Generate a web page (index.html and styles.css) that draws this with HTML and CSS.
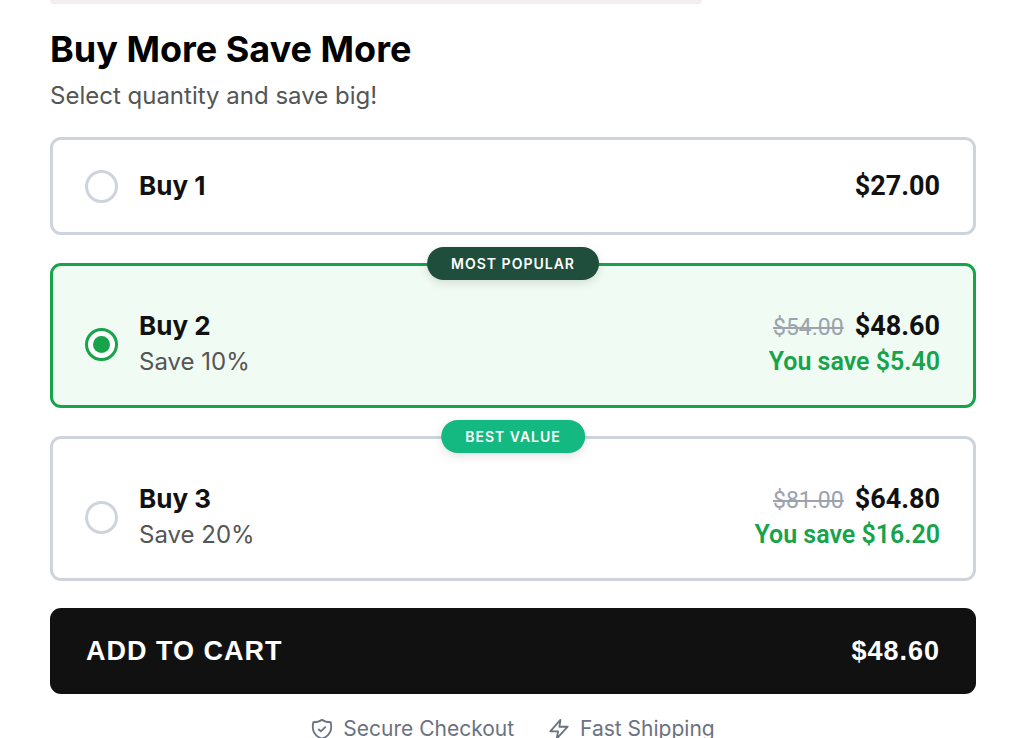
FILE: index.html
```
<!DOCTYPE html>
<html lang="en">

<head>
    <meta charset="UTF-8">
    <meta name="viewport" content="width=device-width, initial-scale=1.0">
    <title>Buy More Save More</title>
    <link rel="stylesheet" href="styles.css">
</head>

<body>
    <main class="product">
        <!-- end of the notice above the offer -->
        <div class="notice"></div>

        <form class="bundle">
            <h2 class="bundle-title">Buy More Save More</h2>
            <p class="bundle-subtitle">Select quantity and save big!</p>

            <div class="options">
                <label class="option">
                    <input type="radio" name="quantity" value="1" class="option-radio">
                    <span class="option-info">
                        <span class="option-name">Buy 1</span>
                    </span>
                    <span class="option-price">
                        <span class="price-row"><span class="price">$27.00</span></span>
                    </span>
                </label>

                <label class="option has-badge selected">
                    <span class="badge badge-popular">Most Popular</span>
                    <input type="radio" name="quantity" value="2" class="option-radio" checked>
                    <span class="option-info">
                        <span class="option-name">Buy 2</span>
                        <span class="option-note">Save 10%</span>
                    </span>
                    <span class="option-price">
                        <span class="price-row"><s class="old-price">$54.00</s><span class="price">$48.60</span></span>
                        <span class="saving">You save $5.40</span>
                    </span>
                </label>

                <label class="option has-badge">
                    <span class="badge badge-value">Best Value</span>
                    <input type="radio" name="quantity" value="3" class="option-radio">
                    <span class="option-info">
                        <span class="option-name">Buy 3</span>
                        <span class="option-note">Save 20%</span>
                    </span>
                    <span class="option-price">
                        <span class="price-row"><s class="old-price">$81.00</s><span class="price">$64.80</span></span>
                        <span class="saving">You save $16.20</span>
                    </span>
                </label>
            </div>

            <button type="button" class="cart-btn">
                <span>ADD TO CART</span>
                <span>$48.60</span>
            </button>
        </form>

        <div class="trust">
            <span class="trust-item">
                <svg class="trust-icon" viewBox="0 0 24 24" aria-hidden="true">
                    <path d="M12 2c2.600 2 5.400 2.600 9.500 2.600.7 2.800.9 5.800.2 8.400C20.500 17.500 16.800 20.800 12 22.500 7.200 20.800 3.500 17.500 2.300 13c-.7-2.600-.5-5.600.2-8.400C6.600 4.600 9.400 4 12 2z" />
                    <path d="M8.500 12.500l2.300 2 4.700-4.500" />
                </svg>
                Secure Checkout
            </span>
            <span class="trust-item">
                <svg class="trust-icon" viewBox="0 0 24 24" aria-hidden="true">
                    <path d="M13.500 2L2.500 14.500H11L9.500 22.500 21.500 9.500H12.500z" />
                </svg>
                Fast Shipping
            </span>
        </div>
    </main>
</body>

</html>
```
FILE: styles.css
```
* {
    box-sizing: border-box;
    margin: 0;
    padding: 0;
}

body {
    background-color: #fff;
    color: #111;
    font-family: Inter, "Liberation Sans", sans-serif;
}

.product {
    padding: 0 48px 0 50px;
}

.notice {
    max-width: 652px;
    height: 4px;
    background-color: #f5eeef;
    border-radius: 0 0 10px 10px;
}

/* heading */
.bundle-title {
    margin-top: 23px;
    color: #000;
    font-size: 36px;
    line-height: 44px;
    font-weight: 700;
}

.bundle-subtitle {
    margin-top: 7px;
    color: #555;
    font-size: 24px;
    line-height: 36px;
}

/* quantity options */
.options {
    display: flex;
    flex-direction: column;
    gap: 28px;
    margin-top: 23px;
}

.option {
    position: relative;
    display: flex;
    align-items: center;
    gap: 21px;
    padding: 28px 33px 28px 32px;
    border: 3px solid #cfd3dc;
    border-radius: 11px;
    cursor: pointer;
}

.option.has-badge {
    padding-top: 42px;
    padding-bottom: 25px;
}

.option.selected {
    background-color: #f0fbf4;
    border-color: #16a34a;
}

.option-radio {
    appearance: none;
    flex: none;
    display: grid;
    place-items: center;
    width: 33px;
    height: 33px;
    background-color: #fff;
    border: 3px solid #cfd3dc;
    border-radius: 50%;
}

.option-radio:checked {
    border-color: #16a34a;
}

.option-radio:checked::before {
    content: "";
    width: 17px;
    height: 17px;
    background-color: #16a34a;
    border-radius: 50%;
}

.option-info,
.option-price {
    display: flex;
    flex-direction: column;
    line-height: 36px;
}

.option-price {
    align-items: flex-end;
    margin-left: auto;
    font-family: Roboto, "Liberation Sans", sans-serif;
}

.option-name {
    font-size: 26px;
    font-weight: 700;
}

.option-note {
    color: #555;
    font-size: 24px;
}

.price-row {
    display: flex;
    align-items: baseline;
    gap: 11px;
    height: 36px;
}

.price {
    font-size: 27px;
    font-weight: 700;
}

.old-price {
    color: #9ca3af;
    font-size: 23px;
}

.saving {
    color: #16a34a;
    font-size: 25px;
    font-weight: 600;
}

/* label on the top border of an option */
.badge {
    position: absolute;
    top: -19px;
    left: 50%;
    transform: translateX(-50%);
    padding: 0 24px;
    border-radius: 17px;
    color: #fff;
    font-size: 14px;
    line-height: 33px;
    font-weight: 600;
    letter-spacing: 1px;
    text-transform: uppercase;
    white-space: nowrap;
    box-shadow: 0 3px 10px rgba(0, 0, 0, 0.12);
}

.badge-popular {
    background-color: #204e3c;
}

.badge-value {
    background-color: #14b981;
}

/* add to cart */
.cart-btn {
    display: flex;
    justify-content: space-between;
    align-items: center;
    width: 100%;
    margin-top: 27px;
    padding: 25px 36px;
    background-color: #111;
    border: none;
    border-radius: 11px;
    color: #fff;
    font-family: "Liberation Sans", Arial, sans-serif;
    font-size: 27px;
    line-height: 36px;
    font-weight: 700;
    letter-spacing: 1px;
    cursor: pointer;
}

.trust {
    display: flex;
    justify-content: center;
    gap: 34px;
    margin-top: 19px;
    color: #6b7280;
    font-size: 21px;
    line-height: 32px;
}

.trust-item {
    display: flex;
    align-items: center;
    gap: 10px;
}

.trust-icon {
    width: 22px;
    height: 22px;
    fill: none;
    stroke: currentColor;
    stroke-width: 2;
    stroke-linecap: round;
    stroke-linejoin: round;
}
```
